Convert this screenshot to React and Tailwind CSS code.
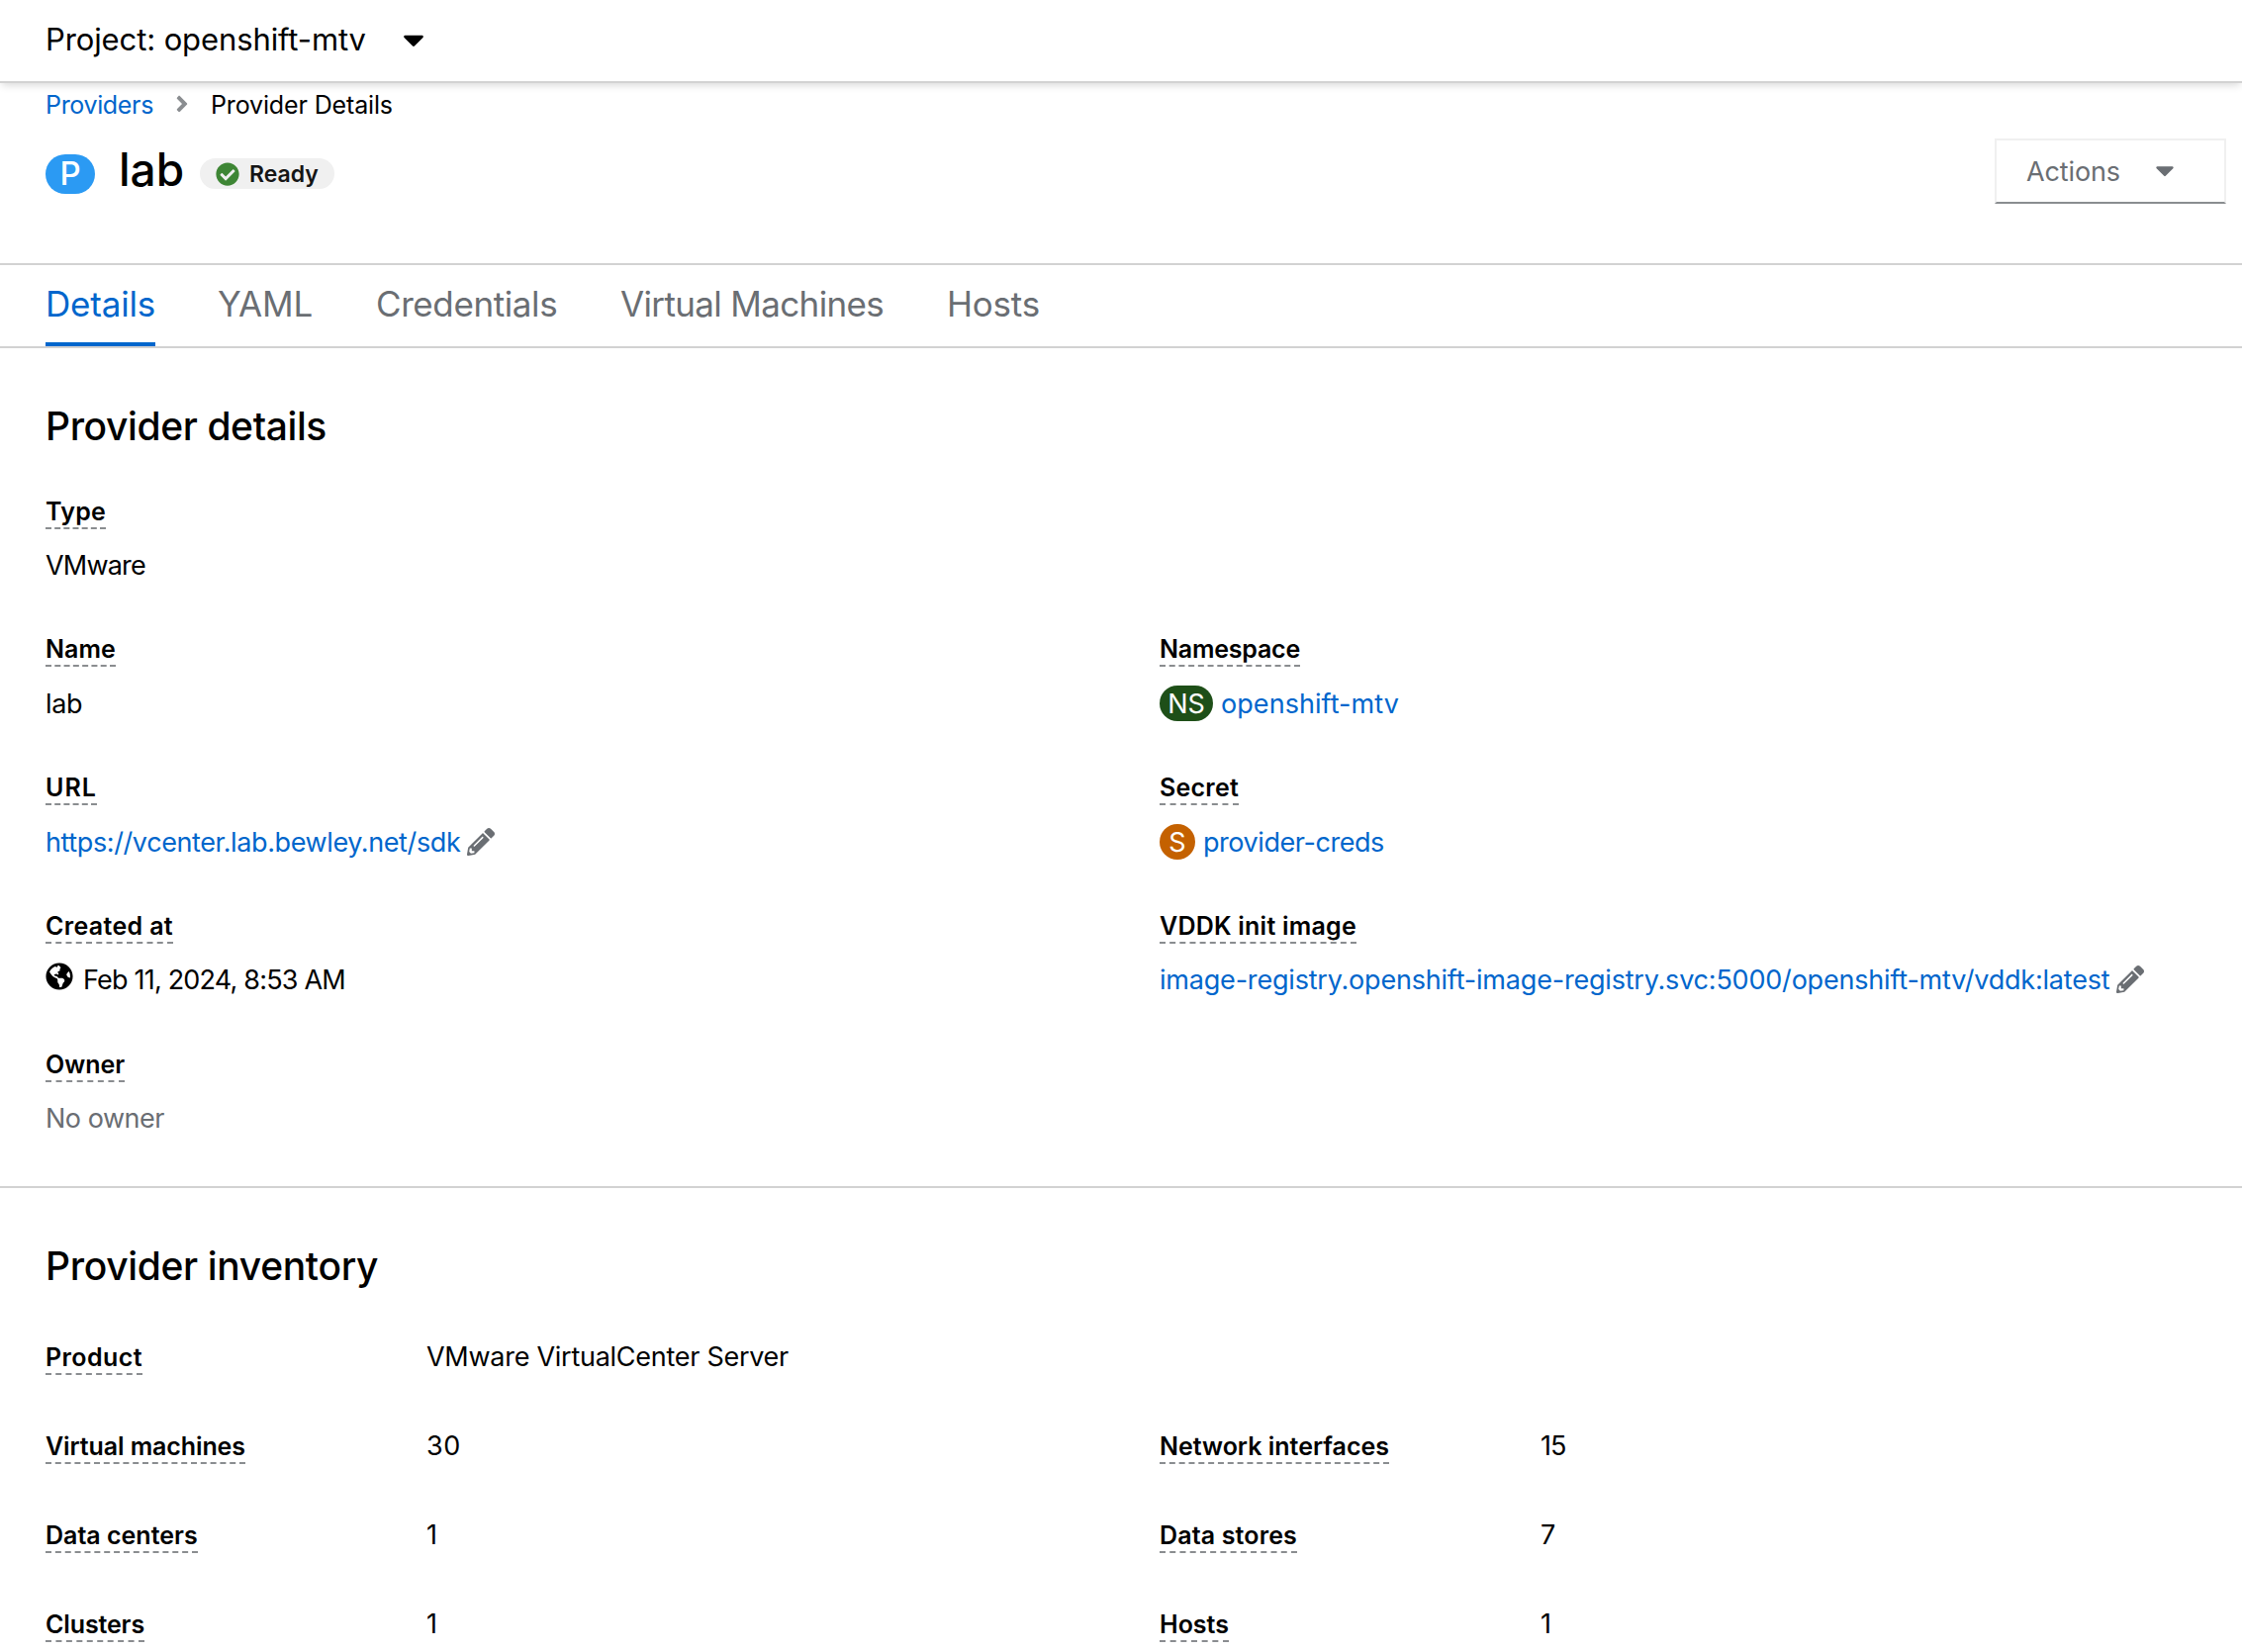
import { FaPencilAlt, FaGlobeAmericas, FaCheckCircle, FaAngleRight, FaCaretDown } from "react-icons/fa";

function Text({ className = "", children }) {
  return <span className={"inline-block whitespace-nowrap pt-[2px] " + className}>{children}</span>;
}

function Label({ t = "", children }) {
  return (
    <span className={"inline-block whitespace-nowrap border-b-2 border-dashed border-[#8a8d90] pt-[2px] text-[25px] leading-[32px] font-semibold " + t}>
      {children}
    </span>
  );
}

function Tab({ className = "", children }) {
  return <a className={"block whitespace-nowrap " + className}>{children}</a>;
}

function Field({ label, t, gap = "mt-[15px]", height = "h-[140px]", children }) {
  return (
    <div className={"flex flex-col items-start " + height}>
      <Label t={t}>{label}</Label>
      <div className={"flex h-[42px] items-center text-[27px] leading-[40px] " + gap}>{children}</div>
    </div>
  );
}

function Stat({ label, t, vt = "", wide = false, children }) {
  return (
    <>
      <div><Label t={t}>{label}</Label></div>
      <div className={wide ? "col-span-3" : ""}><Text className={vt}>{children}</Text></div>
    </>
  );
}

export default function App() {
  return (
    <div className="h-[1670px] w-[2266px] overflow-hidden bg-white font-[Inter,sans-serif] text-black">
      <header className="relative z-10 flex h-[84px] items-center border-b-2 border-[#d2d2d2] bg-white pb-[3px] pl-[46px] shadow-[0_4px_8px_-2px_rgba(3,3,3,0.16)]">
        <Text className="w-[324px] text-[31px] tracking-[-0.11px]">Project: openshift-mtv</Text>
        <FaCaretDown className="ml-[31px] size-[34px]" />
      </header>
      <nav className="flex h-[44px] items-center pl-[46px] text-[25px]">
        <Text className="w-[109px] tracking-[-0.34px] text-[#0066cc]">Providers</Text>
        <FaAngleRight className="mr-[16px] mb-[2px] ml-[16px] size-[26px] text-[#8a8d90]" />
        <Text className="tracking-[-0.14px]">Provider Details</Text>
      </nav>
      <div className="flex h-[138px] items-start pr-[16px] pl-[46px]">
        <span className="mt-[28px] flex h-[40px] w-[50px] items-center justify-center rounded-[20px] bg-[#2b9af3] text-[33px] font-medium text-white">P</span>
        <h1 className="mt-[19px] ml-[24px] w-[66px] text-[46px] leading-[48px] font-medium">lab</h1>
        <span className="mt-[32px] ml-[16px] flex h-[31px] w-[136px] items-center rounded-full bg-[#f0f0f0] pl-[16px] text-[23px] font-semibold text-[#151515]">
          <FaCheckCircle className="mr-[10px] size-[24px] text-[#3e8635]" />
          <Text>Ready</Text>
        </span>
        <button className="mt-[12px] ml-auto flex h-[66px] w-[234px] items-center border-2 border-[#f0f0f0] border-b-[#8a8d90] pl-[30px] text-[27px] text-[#6a6e73]">
          <Text className="w-[94px] tracking-[-0.12px]">Actions</Text>
          <FaCaretDown className="mb-[2px] ml-[31px] size-[30px]" />
        </button>
      </div>
      <div className="flex h-[86px] gap-[64px] border-y-2 border-[#d2d2d2] pl-[46px] text-[35px] leading-[78px] text-[#6a6e73]">
        <Tab className="w-[111px] border-b-4 border-[#0066cc] tracking-[-0.2px] text-[#0066cc]">Details</Tab>
        <Tab className="-ml-px w-[97px] tracking-[-0.18px]">YAML</Tab>
        <Tab className="-ml-px w-[183px] tracking-[-0.4px]">Credentials</Tab>
        <Tab className="w-[266px] tracking-[-0.65px]">Virtual Machines</Tab>
        <Tab className="tracking-[-0.21px]">Hosts</Tab>
      </div>
      <section className="h-[849px] border-b-2 border-[#d2d2d2] pt-[55px] pl-[46px]">
        <h2 className="text-[39px] leading-[48px] font-medium tracking-[-0.39px]">Provider details</h2>
        <div className="mt-[44px] grid grid-cols-[1126px_1fr]">
          <div>
            <Field label="Type" t="tracking-[0.24px]" height="h-[139px]">
              <Text className="tracking-[-0.79px]">VMware</Text>
            </Field>
            <Field label="Name" t="tracking-[0.09px]" gap="mt-[16px]">
              <Text className="tracking-[-0.41px]">lab</Text>
            </Field>
            <Field label="URL" t="tracking-[1.05px]" gap="mt-[16px]">
              <Text className="w-[420px] tracking-[-0.39px] text-[#0066cc]">https://vcenter.lab.bewley.net/sdk</Text>
              <FaPencilAlt className="ml-[6px] size-[28px] text-[#6a6e73]" />
            </Field>
            <Field label="Created at" t="tracking-[0.34px]">
              <FaGlobeAmericas className="mr-[10px] mb-[7px] size-[28px]" />
              <Text className="tracking-[-0.8px]">Feb 11, 2024, 8:53 AM</Text>
            </Field>
            <Field label="Owner">
              <Text className="tracking-[-0.47px] text-[#6a6e73]">No owner</Text>
            </Field>
          </div>
          <div className="pt-[139px]">
            <Field label="Namespace" t="tracking-[-0.21px]" gap="mt-[16px]">
              <span className="mr-[8px] flex h-[36px] w-[54px] items-center justify-center rounded-full bg-[#1e4f18] text-white"><Text>NS</Text></span>
              <Text className="tracking-[0.06px] text-[#0066cc]">openshift-mtv</Text>
            </Field>
            <Field label="Secret" t="tracking-[0.23px]" gap="mt-[16px]">
              <span className="mr-[8px] flex size-[36px] items-center justify-center rounded-full bg-[#c46100] text-white"><Text>S</Text></span>
              <Text className="tracking-[-0.44px] text-[#0066cc]">provider-creds</Text>
            </Field>
            <Field label="VDDK init image" t="tracking-[0.23px]">
              <Text className="w-[961px] tracking-[-0.2px] text-[#0066cc]">
                image-registry.openshift-image-registry.svc:5000/openshift-mtv/vddk:latest
              </Text>
              <FaPencilAlt className="ml-[6px] size-[28px] text-[#6a6e73]" />
            </Field>
          </div>
        </div>
      </section>
      <section className="pt-[55px] pl-[46px]">
        <h2 className="text-[39px] leading-[48px] font-medium tracking-[-0.34px]">Provider inventory</h2>
        <div className="mt-[50px] grid auto-rows-[90px] grid-cols-[385px_741px_385px_1fr] text-[27px] leading-[32px]">
          <Stat label="Product" t="tracking-[0.42px]" vt="tracking-[-0.27px]" wide>VMware VirtualCenter Server</Stat>
          <Stat label="Virtual machines" t="tracking-[-0.1px]" vt="tracking-[0.5px]">30</Stat>
          <Stat label="Network interfaces" vt="tracking-[-1px]">15</Stat>
          <Stat label="Data centers">1</Stat>
          <Stat label="Data stores" t="tracking-[0.14px]">7</Stat>
          <Stat label="Clusters" t="tracking-[-0.13px]">1</Stat>
          <Stat label="Hosts">1</Stat>
        </div>
      </section>
    </div>
  );
}
